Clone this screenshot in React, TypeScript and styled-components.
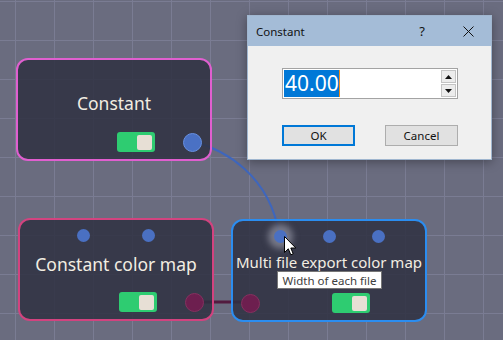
import React from "react";
import styled, { createGlobalStyle } from "styled-components";

const GlobalStyle = createGlobalStyle`
  html, body { margin: 0; padding: 0; overflow: hidden; }
  body { font-family: "Noto Sans", "DejaVu Sans", sans-serif; }
`;

const Canvas = styled.div`
  position: relative;
  width: 503px;
  height: 340px;
  overflow: hidden;
  background-color: #6a6c7f;
  background-image: linear-gradient(to right, #7a7c93 1px, transparent 1px),
    linear-gradient(to bottom, #7a7c93 1px, transparent 1px);
  background-size: 39px 39px;
  background-position: 15px 1px;
`;

const Links = styled.svg`
  position: absolute;
  left: 0;
  top: 0;
  width: 503px;
  height: 340px;
`;

const Node = styled.div<{ $x: number; $y: number; $border: string }>`
  position: absolute;
  left: ${(p) => p.$x}px;
  top: ${(p) => p.$y}px;
  width: 196px;
  height: 103px;
  box-sizing: border-box;
  border: 2px solid ${(p) => p.$border};
  border-radius: 12px;
  background: rgba(46, 49, 65, 0.86);
  display: flex;
  flex-direction: column;
`;

const InputRow = styled.div`
  height: 30px;
  display: flex;
  justify-content: space-evenly;
  align-items: center;
  margin: 0 -2px;
`;

const Slot = styled.div`
  width: 0;
  display: flex;
  justify-content: center;
`;

const InDot = styled.div<{ $hover?: boolean }>`
  flex: none;
  width: 13px;
  height: 13px;
  border-radius: 50%;
  background: #4a70c2;
  box-shadow: ${(p) =>
    p.$hover ? "0 0 6px 6px rgba(170, 172, 185, 0.55)" : "none"};
`;

const Title = styled.div<{ $size: number; $shift: number }>`
  height: 20px;
  line-height: 20px;
  margin-top: ${(p) => p.$shift}px;
  display: flex;
  align-items: center;
  justify-content: center;
  white-space: nowrap;
  font-size: ${(p) => p.$size}px;
  color: #f2ede2;
`;

const BottomRow = styled.div`
  margin-top: auto;
  margin-bottom: 7px;
  height: 20px;
  display: grid;
  grid-template-columns: 19px 1fr 19px;
  align-items: center;
  padding: 0 8px;
`;

const Port = styled.div<{ $kind: "blue" | "maroon" }>`
  width: 19px;
  height: 19px;
  box-sizing: border-box;
  border-radius: 50%;
  background: ${(p) => (p.$kind === "blue" ? "#4a71c4" : "#6d1f4f")};
  border: 1px solid ${(p) => (p.$kind === "blue" ? "#6790e2" : "#86305f")};
  position: relative;
  z-index: 2;
`;

const Toggle = styled.div`
  justify-self: end;
  margin-right: 28px;
  width: 38px;
  height: 20px;
  box-sizing: border-box;
  border-radius: 3px;
  background: #2ecc71;
  display: flex;
  justify-content: flex-end;
  align-items: center;
  padding-right: 3px;
`;

const Knob = styled.div`
  width: 15px;
  height: 15px;
  border-radius: 2px;
  background: #e7dfd5;
`;

const Dialog = styled.div`
  position: absolute;
  left: 247px;
  top: 15px;
  width: 245px;
  height: 145px;
  box-sizing: border-box;
  border: 1px solid #a0b6cf;
  background: #f0f0f0;
  box-shadow: 0 2px 10px rgba(0, 0, 0, 0.35);
  display: flex;
  flex-direction: column;
  font-family: "Noto Sans", "DejaVu Sans", sans-serif;
`;

const TitleBar = styled.div`
  height: 30px;
  background: #a4bcd7;
  display: flex;
  align-items: center;
`;

const TitleText = styled.div`
  flex: 1;
  padding-left: 8px;
  font-size: 11.5px;
  color: #111;
`;

const TitleButton = styled.div`
  width: 46px;
  height: 30px;
  display: flex;
  align-items: center;
  justify-content: center;
  font-size: 13px;
  color: #111;
`;

const Body = styled.div`
  flex: 1;
  display: flex;
  flex-direction: column;
  padding: 22px 33px 0 34px;
`;

const NumberBox = styled.div`
  height: 31px;
  box-sizing: border-box;
  border: 1px solid #a3a3a3;
  background: #fff;
  display: flex;
  align-items: stretch;
  padding: 1px;
`;

const TextArea = styled.div`
  flex: 1;
  display: flex;
  align-items: stretch;
`;

const Selected = styled.span`
  background: #0078d7;
  color: #fff;
  font-size: 21px;
  line-height: 27px;
  padding: 0 0 0 1px;
  border-right: 1px solid #f28c1c;
`;

const Spinner = styled.div`
  width: 15px;
  display: flex;
  flex-direction: column;
  gap: 1px;
`;

const SpinButton = styled.div`
  flex: 1;
  box-sizing: border-box;
  border: 1px solid #c4c4c4;
  background: #ececec;
  display: flex;
  align-items: center;
  justify-content: center;
`;

const Buttons = styled.div`
  margin-top: 26px;
  display: flex;
  justify-content: space-between;
`;

const Button = styled.div<{ $default?: boolean }>`
  width: 73px;
  height: 21px;
  box-sizing: border-box;
  border: ${(p) => (p.$default ? "2px solid #0078d7" : "1px solid #adadad")};
  background: #e1e1e1;
  display: flex;
  align-items: center;
  justify-content: center;
  font-size: 11.5px;
  color: #111;
`;

const Tooltip = styled.div`
  position: absolute;
  left: 277px;
  top: 271px;
  width: 105px;
  height: 18px;
  box-sizing: border-box;
  border: 1px solid #767676;
  background: #ffffff;
  display: flex;
  align-items: center;
  justify-content: center;
  font-size: 11.5px;
  color: #404040;
  white-space: nowrap;
  z-index: 5;
`;

const Cursor = styled.svg`
  position: absolute;
  left: 284px;
  top: 236px;
  z-index: 6;
`;

const Triangle = ({ up }: { up?: boolean }) => (
  <svg width="7" height="4" viewBox="0 0 7 4">
    <path d={up ? "M0 4 L3.5 0 L7 4 Z" : "M0 0 L3.5 4 L7 0 Z"} fill="#111" />
  </svg>
);

const CloseIcon = () => (
  <svg width="11" height="11" viewBox="0 0 11 11">
    <path d="M0.5 0.5 L10.5 10.5 M10.5 0.5 L0.5 10.5" stroke="#111" strokeWidth="1" />
  </svg>
);

export default function App() {
  return (
    <>
      <GlobalStyle />
      <Canvas>
        <Links viewBox="0 0 503 340">
          <path
            d="M192.7 141.3 C 225 150, 270 175, 279.3 235.3"
            stroke="#3e66bd"
            strokeWidth="2"
            fill="none"
          />
          <line x1="195" y1="302" x2="250" y2="302" stroke="#521b3f" strokeWidth="3" />
        </Links>

        <Node $x={16} $y={58} $border="#e05fd0">
          <InputRow />
          <Title $size={17.5} $shift={3}>Constant</Title>
          <BottomRow>
            <span />
            <Toggle>
              <Knob />
            </Toggle>
            <Port $kind="blue" />
          </BottomRow>
        </Node>

        <Node $x={18} $y={218} $border="#d2437f">
          <InputRow>
            <Slot>
              <InDot />
            </Slot>
            <Slot>
              <InDot />
            </Slot>
          </InputRow>
          <Title $size={17.5} $shift={4}>Constant color map</Title>
          <BottomRow>
            <span />
            <Toggle>
              <Knob />
            </Toggle>
            <Port $kind="maroon" />
          </BottomRow>
        </Node>

        <Node $x={231} $y={219} $border="#2b8df0">
          <InputRow>
            <Slot>
              <InDot $hover />
            </Slot>
            <Slot>
              <InDot />
            </Slot>
            <Slot>
              <InDot />
            </Slot>
          </InputRow>
          <Title $size={15} $shift={1}>Multi file export color map</Title>
          <BottomRow>
            <Port $kind="maroon" />
            <Toggle>
              <Knob />
            </Toggle>
            <span />
          </BottomRow>
        </Node>

        <Tooltip>Width of each file</Tooltip>

        <Cursor width="13" height="21" viewBox="0 0 13 21">
          <path
            d="M0.5 0.5 L0.5 16.5 L4.3 12.8 L6.8 18.8 L9.2 17.8 L6.8 12 L11.8 12 Z"
            fill="#fff"
            stroke="#000"
            strokeWidth="1"
            strokeLinejoin="miter"
          />
        </Cursor>

        <Dialog>
          <TitleBar>
            <TitleText>Constant</TitleText>
            <TitleButton>?</TitleButton>
            <TitleButton>
              <CloseIcon />
            </TitleButton>
          </TitleBar>
          <Body>
            <NumberBox>
              <TextArea>
                <Selected>40.00</Selected>
              </TextArea>
              <Spinner>
                <SpinButton>
                  <Triangle up />
                </SpinButton>
                <SpinButton>
                  <Triangle />
                </SpinButton>
              </Spinner>
            </NumberBox>
            <Buttons>
              <Button $default>OK</Button>
              <Button>Cancel</Button>
            </Buttons>
          </Body>
        </Dialog>
      </Canvas>
    </>
  );
}
